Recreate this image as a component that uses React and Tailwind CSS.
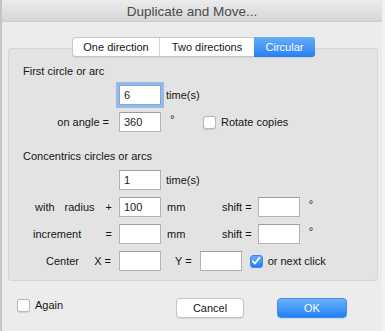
import React from "react";

const font = { fontFamily: '"Liberation Sans", Arial, sans-serif' };

function Input({ value, focused }) {
  return (
    <div
      className={
        "h-[20px] w-[42px] shrink-0 bg-white border pl-[4px] leading-[18px] text-[11px] text-[#1a1a1a] " +
        (focused
          ? "border-[#7ea9de] shadow-[0_0_0_3px_rgba(120,168,232,0.7)]"
          : "border-[#b3b3b3] border-t-[#9d9d9d]")
      }
    >
      {value}
    </div>
  );
}

function Check({ checked }) {
  if (checked) {
    return (
      <div className="h-[13px] w-[13px] shrink-0 rounded-[3px] bg-gradient-to-b from-[#68aef8] to-[#1f7ff3] border border-[#3d8be8] flex items-center justify-center">
        <svg width="10" height="10" viewBox="0 0 10 10">
          <path d="M1.8 5.2 L4 7.6 L8.4 1.8" fill="none" stroke="white" strokeWidth="1.7" strokeLinecap="round" strokeLinejoin="round" />
        </svg>
      </div>
    );
  }
  return <div className="h-[13px] w-[13px] shrink-0 rounded-[3px] bg-white border border-[#b8b8b8] shadow-[0_0.5px_1px_rgba(0,0,0,0.12)]" />;
}

export default function App() {
  return (
    <div style={font} className="w-[385px] h-[331px] bg-[#ececec] border-l-2 border-r-[3px] border-l-[#c4c4c4] border-r-[#f2f2f2] flex flex-col text-[11px] text-[#151515] overflow-hidden">
      {/* Title bar */}
      <div className="h-[22px] shrink-0 bg-gradient-to-b from-[#ececec] to-[#d6d6d6] border-b border-[#cdcdcd] text-center text-[13.5px] text-[#4a4a4a] pt-[2px] leading-[19px]">
        Duplicate and Move...
      </div>

      {/* Tabs */}
      <div className="flex justify-center mt-[15px] -mb-[9px] relative z-10 pl-[3px]">
        <div className="flex h-[20px] rounded-[4px] border border-[#c6c6c6] bg-white shadow-[0_1px_1px_rgba(0,0,0,0.08)] leading-[18px]">
          <div className="w-[87px] text-center border-r border-[#d4d4d4]">One direction</div>
          <div className="w-[94px] text-center">Two directions</div>
          <div className="w-[61px] text-center text-white bg-gradient-to-b from-[#67acf8] to-[#2381f5] rounded-r-[3px] -my-px -mr-px pt-px h-[20px]">Circular</div>
        </div>
      </div>

      {/* Group box */}
      <div className="ml-[6px] w-[370px] h-[233px] shrink-0 bg-[#e3e3e3] border border-[#d6d6d6] rounded-[3px] pt-[16px] flex flex-col leading-[13px]">
        <div className="pl-[14px] h-[13px]">First circle or arc</div>

        <div className="flex items-center mt-[7px]">
          <div className="w-[103px]" />
          <div className="ml-[7px]"><Input value="6" focused /></div>
          <div className="ml-[5px]">time(s)</div>
        </div>

        <div className="flex items-center mt-[7px]">
          <div className="w-[103px] text-right pr-[3px]">on angle =</div>
          <div className="ml-[7px]"><Input value="360" /></div>
          <div className="w-[42px] pl-[9px] -mt-[6px]">°</div>
          <Check />
          <div className="ml-[5px]">Rotate copies</div>
        </div>

        <div className="pl-[14px] h-[13px] mt-[18px]">Concentrics circles or arcs</div>

        <div className="flex items-center mt-[7px]">
          <div className="w-[103px]" />
          <div className="ml-[7px]"><Input value="1" /></div>
          <div className="ml-[5px]">time(s)</div>
        </div>

        <div className="flex items-center mt-[7px]">
          <div className="w-[103px] flex pl-[26px]">
            <span>with</span>
            <span className="ml-[10px]">radius</span>
            <span className="ml-auto">+</span>
          </div>
          <div className="ml-[7px]"><Input value="100" /></div>
          <div className="w-[61px] pl-[6px]">mm</div>
          <div>shift =</div>
          <div className="ml-[6px]"><Input value="" /></div>
          <div className="ml-[9px] -mt-[6px]">°</div>
        </div>

        <div className="flex items-center mt-[7px]">
          <div className="w-[103px] flex pl-[24px]">
            <span>increment</span>
            <span className="ml-auto">=</span>
          </div>
          <div className="ml-[7px]"><Input value="" /></div>
          <div className="w-[61px] pl-[6px]">mm</div>
          <div>shift =</div>
          <div className="ml-[6px]"><Input value="" /></div>
          <div className="ml-[9px] -mt-[6px]">°</div>
        </div>

        <div className="flex items-center mt-[7px]">
          <div className="w-[103px] flex pl-[37px] pr-[1px]">
            <span>Center</span>
            <span className="ml-auto">X =</span>
          </div>
          <div className="ml-[7px]"><Input value="" /></div>
          <div className="ml-[14px]">Y =</div>
          <div className="ml-[8px]"><Input value="" /></div>
          <div className="ml-[8px]"><Check checked /></div>
          <div className="ml-[5px]">or next click</div>
        </div>
      </div>

      {/* Bottom row */}
      <div className="flex items-start mt-[17px] leading-[13px]">
        <div className="ml-[15px] mt-[1px] flex items-center">
          <Check />
          <div className="ml-[5px]">Again</div>
        </div>
        <div className="ml-auto w-[68px] h-[20px] rounded-[4px] bg-white border border-[#c4c4c4] shadow-[0_1px_1px_rgba(0,0,0,0.1)] text-center leading-[18px]">
          Cancel
        </div>
        <div className="ml-[33px] mr-[35px] w-[70px] h-[20px] rounded-[4px] bg-gradient-to-b from-[#6ab1fa] to-[#1b80f8] border border-[#3d8cf0] text-white text-center leading-[18px] shadow-[0_1px_1px_rgba(0,0,0,0.1)]">
          OK
        </div>
      </div>
    </div>
  );
}
